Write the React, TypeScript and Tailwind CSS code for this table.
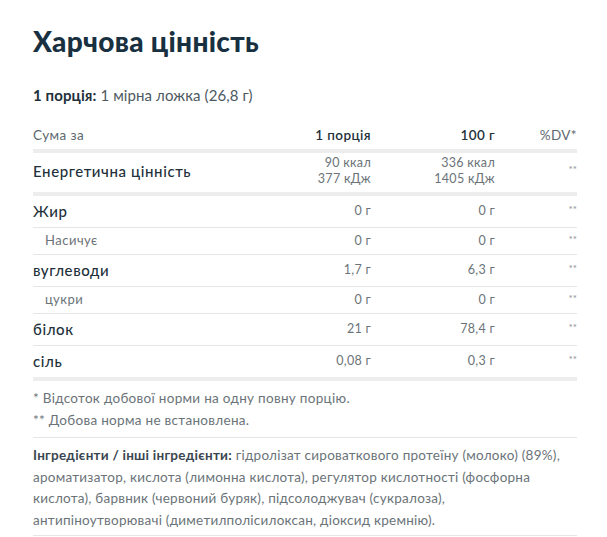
const rows = [
  { label: "Жир", a: "0 г", b: "0 г", sub: false },
  { label: "Насичує", a: "0 г", b: "0 г", sub: true },
  { label: "вуглеводи", a: "1,7 г", b: "6,3 г", sub: false },
  { label: "цукри", a: "0 г", b: "0 г", sub: true },
  { label: "білок", a: "21 г", b: "78,4 г", sub: false },
  { label: "сіль", a: "0,08 г", b: "0,3 г", sub: false },
];

export default function App() {
  return (
    <div className="bg-white w-[607px] min-h-[537px] px-[33px] pt-[22px] font-['Lato',sans-serif] text-[#22303a]">
      <h2 className="text-[28px] leading-[38px] font-black text-[#183040] tracking-[0.3px]">
        Харчова цінність
      </h2>
      <p className="mt-[25px] text-[15px] leading-[20px] tracking-[0.1px] text-[#4d5961]">
        <span className="font-bold text-[#22303a]">1 порція:</span> 1 мірна ложка (26,8 г)
      </p>

      <div className="mt-[17px] w-[544px]">
        <div className="grid grid-cols-[1fr_124px_124px_82px] items-center h-[31px] border-b-4 border-[#ededed] text-[13.5px] tracking-[0.4px] text-[#5d6870]">
          <span>Сума за</span>
          <span className="text-right font-semibold text-[#22303a]">1 порція</span>
          <span className="text-right font-semibold text-[#22303a]">100 г</span>
          <span className="text-right">%DV*</span>
        </div>

        <div className="grid grid-cols-[1fr_124px_124px_82px] items-center h-[43px] pb-[3px] border-b-4 border-[#ededed]">
          <span className="text-[15px] font-medium tracking-[0.6px]">Енергетична цінність</span>
          <span className="text-right text-[12.5px] leading-[16px] tracking-[0.3px] text-[#6b7378]">
            90 ккал
            <br />
            377 кДж
          </span>
          <span className="text-right text-[12.5px] leading-[16px] tracking-[0.3px] text-[#6b7378]">
            336 ккал
            <br />
            1405 кДж
          </span>
          <span className="text-right text-[10px] text-[#8a9298] -mt-[4px]">**</span>
        </div>

        {rows.map((r, i) => (
          <div
            key={r.label}
            className={
              "grid grid-cols-[1fr_124px_124px_82px] items-center " +
              (i === rows.length - 1
                ? "h-[35px] border-b-4 border-[#ededed]"
                : r.sub
                  ? "h-[27px] border-b border-[#e6e6e6]"
                  : "h-[32px] border-b border-[#e6e6e6]")
            }
          >
            {r.sub ? (
              <span className="pl-[12px] text-[13px] text-[#6b7378] tracking-[0.5px]">{r.label}</span>
            ) : (
              <span className="text-[15px] font-medium tracking-[0.6px]">{r.label}</span>
            )}
            <span className="text-right text-[12.5px] tracking-[0.3px] text-[#6b7378]">{r.a}</span>
            <span className="text-right text-[12.5px] tracking-[0.3px] text-[#6b7378]">{r.b}</span>
            <span className="text-right text-[10px] text-[#8a9298] -mt-[4px]">**</span>
          </div>
        ))}

        <div className="pt-[6px] pb-[6px] border-b border-[#e6e6e6] text-[13.5px] leading-[22px] tracking-[0.3px] text-[#6b7378]">
          <p>* Відсоток добової норми на одну повну порцію.</p>
          <p>** Добова норма не встановлена.</p>
        </div>

        <div className="pt-[7px] pb-[4px] border-b border-[#e6e6e6] text-[13.5px] leading-[21.5px] tracking-[0.25px] text-[#6b7378]">
          <p>
            <span className="font-bold text-[#3a4650]">Інгредієнти / інші інгредієнти:</span> гідролізат
            сироваткового протеїну (молоко) (89%),
            <br />
            ароматизатор, кислота (лимонна кислота), регулятор кислотності (фосфорна
            <br />
            кислота), барвник (червоний буряк), підсолоджувач (сукралоза),
            <br />
            антипіноутворювачі (диметилполісилоксан, діоксид кремнію).
          </p>
        </div>
      </div>
    </div>
  );
}
